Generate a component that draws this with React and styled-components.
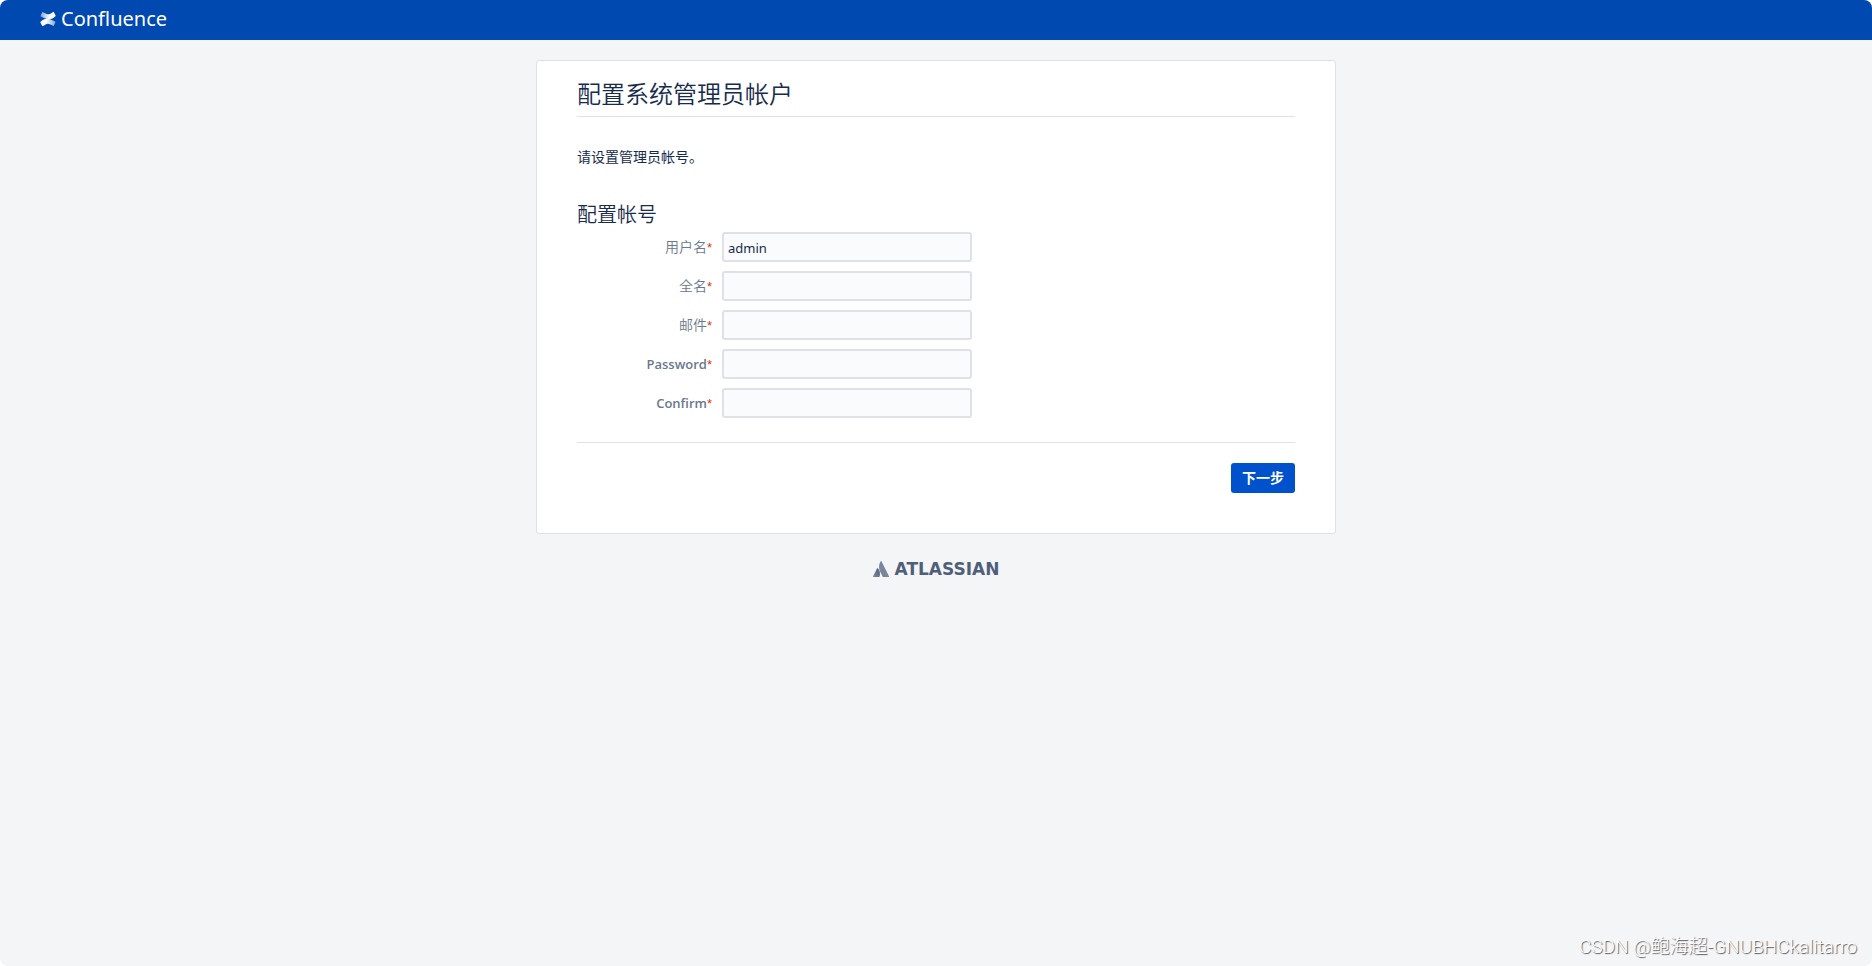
import React from 'react';
import styled, { createGlobalStyle } from 'styled-components';

const GlobalStyle = createGlobalStyle`
    html {
        background: #fff;
    }

    body {
        margin: 0;
        color: #172b4d;
        font-family: 'Noto Sans', 'Noto Sans CJK SC', sans-serif;
        font-size: 14px;
        line-height: 20px;
    }
`;

const Page = styled.div`
    display: flex;
    flex-direction: column;
    min-height: 100vh;
    border-radius: 8px;
    overflow: hidden;
    background: #f4f5f7;
`;

const Header = styled.header`
    box-sizing: border-box;
    display: flex;
    align-items: center;
    height: 40px;
    padding: 0 40px 2px;
    background: #0049b0;
`;

const Logo = styled.a`
    display: flex;
    align-items: center;
    gap: 5px;
    color: #fff;
    font-size: 20px;
    line-height: 24px;
    text-decoration: none;
`;

const Panel = styled.main`
    box-sizing: border-box;
    width: 100%;
    max-width: 800px;
    margin: 20px auto 0;
    padding: 15px 40px 40px;
    border: 1px solid #dfe1e5;
    border-radius: 3px;
    background: #fff;
`;

const Title = styled.h1`
    margin: 0;
    padding-bottom: 6px;
    border-bottom: 1px solid #dfe1e5;
    font-family: 'Noto Sans CJK SC', sans-serif;
    font-size: 24px;
    font-weight: 350;
    line-height: 34px;
`;

const Intro = styled.p`
    margin: 30px 0 32px;
`;

const SectionTitle = styled.h2`
    margin: 0 0 3px;
    font-family: 'Noto Sans CJK SC', sans-serif;
    font-size: 20px;
    font-weight: 350;
    line-height: 30px;
`;

const Fields = styled.div`
    display: flex;
    flex-direction: column;
    gap: 9px;
    padding-bottom: 24px;
`;

const Field = styled.div`
    display: grid;
    grid-template-columns: 135px 250px;
    column-gap: 10px;
`;

const Label = styled.label`
    padding-top: 5px;
    color: #6b778c;
    font-family: 'Open Sans', 'Noto Sans CJK SC', sans-serif;
    font-size: ${({ $latin }) => ($latin ? '13px' : '14px')};
    font-weight: ${({ $latin }) => ($latin ? 600 : 350)};
    text-align: right;
    white-space: nowrap;
`;

const Required = styled.span`
    color: #de350b;
    font-family: 'Liberation Sans', sans-serif;
    font-size: 13px;
    font-weight: 400;
`;

const TextInput = styled.input`
    box-sizing: border-box;
    width: 100%;
    height: 30px;
    padding: 4px 4px 2px;
    border: 2px solid #dfe1e6;
    border-radius: 3px;
    background: #fafbfc;
    color: #172b4d;
    font-family: inherit;
    font-size: 13px;
`;

const Buttons = styled.div`
    display: flex;
    justify-content: flex-end;
    padding-top: 20px;
    border-top: 1px solid #dfe1e5;
`;

const SubmitButton = styled.button`
    height: 30px;
    padding: 0 11px 2px;
    border: none;
    border-radius: 3px;
    background: #0052cc;
    color: #fff;
    font-family: inherit;
    font-size: 14px;
    font-weight: 700;
`;

const Footer = styled.footer`
    display: flex;
    justify-content: center;
    padding-top: 23px;
`;

const AtlassianLink = styled.a`
    display: flex;
    align-items: center;
    gap: 6px;
    color: #505f79;
    font-family: 'DejaVu Sans', sans-serif;
    font-size: 17px;
    font-weight: 700;
    line-height: 24px;
    text-decoration: none;
`;

const Watermark = styled.div`
    margin-top: auto;
    padding: 0 15px 6px;
    color: #fff;
    font-family: Roboto, 'Noto Sans CJK SC', sans-serif;
    font-size: 19px;
    font-weight: 300;
    line-height: 26px;
    text-align: right;
    text-shadow: 1px 1px 1px #555;
`;

const ConfluenceIcon = () => (
    <svg width='16' height='16' viewBox='0 0 16 16' aria-hidden='true'>
        <defs>
            <linearGradient id='confluence-top' x1='0' y1='0' x2='1' y2='0'>
                <stop offset='0' stopColor='#fff' stopOpacity='0.5' />
                <stop offset='0.6' stopColor='#fff' />
            </linearGradient>
            <linearGradient id='confluence-bottom' x1='1' y1='0' x2='0' y2='0'>
                <stop offset='0' stopColor='#fff' stopOpacity='0.5' />
                <stop offset='0.6' stopColor='#fff' />
            </linearGradient>
        </defs>
        <path
            fill='url(#confluence-top)'
            d='M15.6 4.6 13.9 1.2a.6.6 0 0 0-.8-.3C9.8 2.6 9.4 4.3 6.1 2.7L2.9 1.2a.6.6 0 0 0-.8.3L.6 4.7a.6.6 0 0 0 .3.8l3.2 1.5c4.3 2 8 1.8 11.3-1.7a.6.6 0 0 0 .2-.7z'
        />
        <path
            fill='url(#confluence-bottom)'
            d='M.4 11.4l1.7 3.4a.6.6 0 0 0 .8.3c3.3-1.7 3.700-3.400 7-1.800l3.200 1.500a.6.6 0 0 0 .8-.3l1.500-3.200a.6.6 0 0 0-.3-.8l-3.200-1.500c-4.300-2-8-1.800-11.300 1.700a.6.6 0 0 0-.2.7z'
        />
    </svg>
);

const AtlassianIcon = () => (
    <svg width='16' height='16' viewBox='0 0 16 16' aria-hidden='true'>
        <defs>
            <linearGradient id='atlassian-leg' x1='1' y1='0' x2='0' y2='1'>
                <stop offset='0' stopColor='#505f79' />
                <stop offset='1' stopColor='#7a869a' />
            </linearGradient>
        </defs>
        <path
            fill='url(#atlassian-leg)'
            d='M4.8 7.3a.45.45 0 0 0-.8.1L.1 15.3a.5.5 0 0 0 .4.7h5.500a.5.5 0 0 0 .4-.3c1.200-2.500.5-6.200-1.600-8.400z'
        />
        <path
            fill='#7a869a'
            d='M7.7.3c-2.200 3.500-2 7.300-.6 10.200l2.600 5.200a.5.5 0 0 0 .4.3h5.500a.5.5 0 0 0 .4-.7L8.500.3a.45.45 0 0 0-.8 0z'
        />
    </svg>
);

const fields = [
    { id: 'username', label: '用户名', type: 'text', value: 'admin' },
    { id: 'fullName', label: '全名', type: 'text' },
    { id: 'email', label: '邮件', type: 'email' },
    { id: 'password', label: 'Password', type: 'password', latin: true },
    { id: 'confirm', label: 'Confirm', type: 'password', latin: true },
];

const App = () => (
    <>
        <GlobalStyle />
        <Page>
            <Header>
                <Logo href='#'>
                    <ConfluenceIcon />
                    Confluence
                </Logo>
            </Header>
            <Panel>
                <Title>配置系统管理员帐户</Title>
                <Intro>请设置管理员帐号。</Intro>
                <form onSubmit={(e) => e.preventDefault()}>
                    <SectionTitle>配置帐号</SectionTitle>
                    <Fields>
                        {fields.map(({ id, label, type, value, latin }) => (
                            <Field key={id}>
                                <Label htmlFor={id} $latin={latin}>
                                    {label}<Required>*</Required>
                                </Label>
                                <TextInput id={id} name={id} type={type} defaultValue={value} />
                            </Field>
                        ))}
                    </Fields>
                    <Buttons>
                        <SubmitButton type='submit'>下一步</SubmitButton>
                    </Buttons>
                </form>
            </Panel>
            <Footer>
                <AtlassianLink href='#'>
                    <AtlassianIcon />
                    ATLASSIAN
                </AtlassianLink>
            </Footer>
            <Watermark>CSDN @鲍海超-GNUBHCkalitarro</Watermark>
        </Page>
    </>
);

export default App;
